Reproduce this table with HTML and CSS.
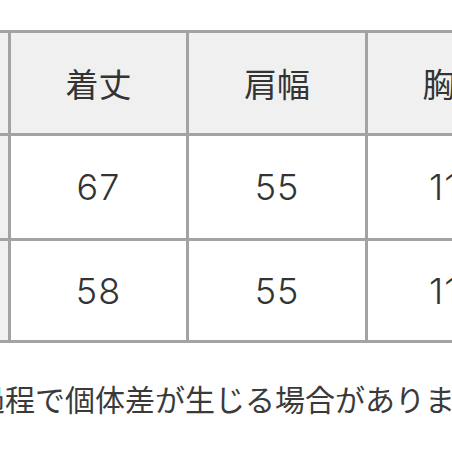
FILE: index.html
```html
<!DOCTYPE html>
<html lang="ja">
<head>
<meta charset="utf-8">
<link rel="stylesheet" href="styles.css">
</head>
<body>
<div class="page">
  <div class="sizes">
    <div class="cell head">サイズ</div>
    <div class="cell head">着丈</div>
    <div class="cell head">肩幅</div>
    <div class="cell head">胸囲</div>
    <div class="cell head">M</div>
    <div class="cell">67</div>
    <div class="cell">55</div>
    <div class="cell">116</div>
    <div class="cell head">L</div>
    <div class="cell">58</div>
    <div class="cell">55</div>
    <div class="cell">116</div>
  </div>
  <p class="note">製造過程で個体差が生じる場合があります。</p>
</div>
</body>
</html>
```

FILE: styles.css
```css
html, body {
  margin: 0;
  padding: 0;
  background: #ffffff;
}
.page {
  width: 452px;
  height: 452px;
  overflow: hidden;
  font-family: Inter, "Noto Sans CJK JP", sans-serif;
  color: #333333;
}
.sizes {
  display: grid;
  grid-template-columns: 175px 175px 176px 175px;
  grid-template-rows: 100px 102px 99px;
  gap: 3px;
  padding: 3px;
  width: max-content;
  background: #a3a3a3;
  margin: 30px 0 0 -170px;
}
.cell {
  background: #ffffff;
  display: flex;
  align-items: center;
  justify-content: center;
  font-size: 36px;
  font-weight: 300;
  letter-spacing: 1px;
}
.cell.head {
  background: #f0f0f0;
  font-size: 33px;
  font-weight: 400;
  letter-spacing: 0;
  font-family: "Noto Sans CJK JP", sans-serif;
}
.note {
  margin: 40px 0 0 -85px;
  font-family: "Noto Sans CJK JP", sans-serif;
  font-size: 30px;
  line-height: 30px;
  white-space: nowrap;
  color: #3a3a3a;
}
```
